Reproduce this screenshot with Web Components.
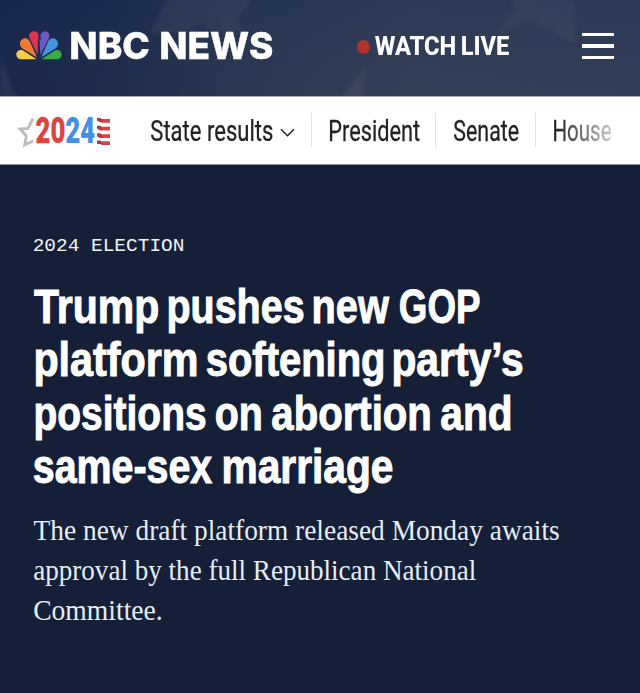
<!DOCTYPE html>
<html lang="en">
<head>
<meta charset="utf-8">
<title>NBC News</title>
<style>html,body{margin:0;background:#151f38}</style>
</head>
<body>
<news-page></news-page>
<script>
const define = (name, html, ready) => customElements.define(name, class extends HTMLElement {
  connectedCallback() {
    if (this.shadowRoot) return;
    this.attachShadow({mode: 'open'}).innerHTML = html;
    if (ready) ready(this, this.shadowRoot);
  }
});

/* One line of type whose inked width equals the w attribute; h is the box height, b the baseline. */
define('type-line', `<style>
  :host{display:block;flex:none}
  svg{display:block;overflow:visible}
  text{fill:currentColor;white-space:pre;stroke:currentColor;stroke-width:var(--embolden,0)}
</style><svg><text></text></svg>`, (host, root) => {
  const svg = root.querySelector('svg'), text = root.querySelector('text');
  const w = +host.getAttribute('w'), h = +host.getAttribute('h'), b = +host.getAttribute('b');
  const str = host.textContent;
  svg.setAttribute('width', w);
  svg.setAttribute('height', h);
  text.textContent = str;
  const cs = getComputedStyle(host);
  const ctx = document.createElement('canvas').getContext('2d');
  /* Side bearings are read at ten times the size, as glyph bounds are rounded to whole pixels. */
  ctx.font = cs.fontWeight + ' ' + parseFloat(cs.fontSize) * 10 + 'px ' + cs.fontFamily;
  const first = ctx.measureText(str[0]), last = ctx.measureText(str[str.length - 1]);
  const left = -first.actualBoundingBoxLeft / 10, right = (last.width - last.actualBoundingBoxRight) / 10;
  const s = w / (text.getComputedTextLength() - left - right);
  text.setAttribute('transform', `translate(${-left * s} ${b}) scale(${s} 1)`);
});

define('peacock-logo', `<style>:host{display:block;flex:none}svg{display:block}</style>
<svg width="46" height="29" viewBox="0 0 46 29">
  <path fill="#f5cd45" d="M20.500 28.300H5.200A4.800 4.800 0 0 1 .3 23.600c0-3.400 3.400-5.600 6.900-4.200z"/>
  <path fill="#ee7b34" d="M21 26.500 6.300 17.200C3.400 15.100 3.300 11.300 5.300 9 8 6.200 12.200 7 13.700 10.300z"/>
  <path fill="#dc3550" d="M21.700 24 13.600 7.300C12.300 3.700 14.200.500 17.800.300c3.400 0 5.600 2.700 4.800 6.100L21.900 10z"/>
  <path fill="#6d59c5" d="M24.300 24 23.500 8.500l1.600-.2c.4-1-.2-2-1-2.300.6-3.500 2.200-5.600 4.900-5.700 3.700.1 5.400 3.400 3.900 6.900z"/>
  <path fill="#4296dc" d="m25 26.500 7.300-16.200C33.800 7 38 6.200 40.600 9c2.100 2.400 1.900 6.100-.9 8.200z"/>
  <path fill="#3dab48" d="m25.500 28.300 13.300-8.900c3.500-1.400 6.900.8 6.900 4.200a4.800 4.800 0 0 1-4.900 4.700z"/>
</svg>`);

define('menu-icon', `<style>:host{display:flex;flex-direction:column;gap:8px;width:32px;flex:none}
i{height:3.600px;background:#fff}</style><i></i><i></i><i></i>`);

define('site-header', `<style>
  :host{display:grid;height:96px;overflow:hidden;border-bottom:1px solid #a9adbb;color:#fff}
  .bg,.row{grid-area:1/1}
  .row{display:flex;align-items:flex-start;padding:0 26px 0 16px;box-sizing:border-box}
  peacock-logo{margin:31px 9px 0 0}
  .brand{font:800 37px Inter,sans-serif;display:flex;gap:12px;margin-top:32px;--embolden:.4px}
  .dot{width:13.500px;height:13.500px;border-radius:50%;background:#b2312d;margin:40px 5px 0 84.500px;flex:none}
  .live{font:800 25px Roboto,sans-serif;margin-top:37px;display:flex;gap:7px}
  menu-icon{margin:32.500px 0 0 auto}
</style>
<svg class="bg" width="640" height="96" viewBox="0 0 640 96">
  <defs><linearGradient id="sky"><stop offset="0" stop-color="#15224a"/><stop offset=".18" stop-color="#1a284b"/><stop offset=".36" stop-color="#273552"/><stop offset=".65" stop-color="#323e56"/><stop offset="1" stop-color="#303c58"/></linearGradient>
  <linearGradient id="fall" x2="0" y2="1"><stop offset="0" stop-color="#1f2f58" stop-opacity=".3"/><stop offset="1" stop-color="#3d4650" stop-opacity=".15"/></linearGradient>
  <filter id="soft"><feGaussianBlur stdDeviation="2"/></filter></defs>
  <path fill="url(#sky)" d="M0 0h640v96H0z"/><path fill="url(#fall)" d="M0 0h640v96H0z"/>
  <g filter="url(#soft)" fill="#6c7275">
    <path opacity=".15" d="m166-2-16 36 35-1 17-9 12 8 28 2-3-19 15-17z"/>
    <path opacity=".18" d="M0 54 16 98H0z"/>
    <path opacity=".12" d="m510-2 4 12-19 26 33-16 48 24-2-46z"/>
    <path opacity=".2" d="m367 66-26 32h21z"/>
  </g>
</svg>
<div class="row">
  <peacock-logo></peacock-logo>
  <div class="brand"><type-line w="78" h="30" b="27">NBC</type-line><type-line w="111" h="30" b="27">NEWS</type-line></div>
  <span class="dot"></span>
  <div class="live"><type-line w="80" h="20" b="18">WATCH</type-line><type-line w="47" h="20" b="18">LIVE</type-line></div>
  <menu-icon></menu-icon>
</div>`);

define('election-logo', `<style>:host{display:flex;flex:none;align-items:flex-start;margin-top:2px;width:93.500px;font:900 36.500px Roboto,sans-serif}
svg{flex:none;display:block}type-line{margin:1.500px 1.500px 0 0}.s{margin-top:2px}.r{color:#dc4441}.b{color:#438fe4}</style>
<svg width="19" height="34" viewBox="0 0 19 34"><path d="M16 3.500 11 13.500 3 14 9.300 21 7.600 30 16 26" fill="none" stroke="#b8bfc1" stroke-width="2.800"/></svg>
<type-line class="r" w="28.500" h="30" b="26">20</type-line><type-line class="b" w="28.500" h="30" b="26">24</type-line>
<svg class="s" width="15" height="30" viewBox="0 0 15 30"><g fill="#cf4646"><path d="M5 2h9v3.800H5zM5 9.800h9v3.800H5zM5 17.300h9v3.800H5zM5 24.300h9v3.700H5z"/></g><g fill="#b7383e"><path d="M1 1h3.500l1.500 2v2H3.500L1 3.500zM1 8.800h3.500l1.500 2v2.500H3.500L1 11.500zM1 16.300h3.500l1.500 2V21H3.500L1 19.300zM1 23.500h3.500l1.500 2V27H1z"/></g></svg>`);

define('election-nav', `<style>
  :host{display:flex;align-items:flex-start;height:68px;box-sizing:border-box;background:#fff;color:#222;padding:16px 0 0 16.500px;font:400 28.800px Roboto,sans-serif;--embolden:.25px;border-bottom:1px solid #8b90a0}
  .items{display:flex;margin-left:41px;height:34px;-webkit-mask:linear-gradient(90deg,#000 405px,rgba(0,0,0,.22) 462px);mask:linear-gradient(90deg,#000 405px,rgba(0,0,0,.22) 462px)}
  svg{margin:15px 0 0 7px;display:block;flex:none}
  i{width:1px;background:#e2e3e5;flex:none;margin:0 18px 0 16px}
</style>
<election-logo></election-logo>
<div class="items"><type-line w="121.500" h="34" b="27.500">State results</type-line>
<svg width="15" height="10" viewBox="0 0 15 10"><path d="m1 1.200 6.500 6.600L14 1.200" fill="none" stroke="#222" stroke-width="1.500"/></svg>
<i></i><type-line w="89.500" h="34" b="27.500">President</type-line>
<i></i><type-line w="64.500" h="34" b="27.500">Senate</type-line>
<i></i><type-line w="57" h="34" b="27.500">House</type-line></div>`);

define('article-hero', `<style>
  :host{display:block;padding:73px 34px 0;color:#fff}
  h1{margin:32px 0 0;font:700 48.500px "Liberation Sans",sans-serif;--embolden:1px}
  h1 div{display:flex;gap:11px}
  .in{padding-left:1.500px}
  .eye{font:400 19px "Liberation Mono",monospace;color:#f1f5fa}
  p{margin:19.500px 0 0;font:400 28.800px "Liberation Serif",serif;color:#e6eef7}
</style>
<type-line class="eye" w="149" h="18" b="13">2024 ELECTION</type-line>
<h1>
<div><type-line w="124" h="53.400" b="34.500">Trump</type-line> <type-line w="134" h="53.400" b="34.500">pushes</type-line> <type-line w="75" h="53.400" b="34.500">new</type-line> <type-line w="79.500" h="53.400" b="34.500">GOP</type-line></div>
<div class="in"><type-line w="160" h="53.400" b="34.500">platform</type-line> <type-line w="176" h="53.400" b="34.500">softening</type-line> <type-line w="128" h="53.400" b="34.500">party’s</type-line></div>
<div class="in"><type-line w="169" h="53.400" b="34.500">positions</type-line> <type-line w="45" h="53.400" b="34.500">on</type-line> <type-line w="158" h="53.400" b="34.500">abortion</type-line> <type-line w="69" h="53.400" b="34.500">and</type-line></div>
<div><type-line w="178.500" h="53.400" b="34.500">same-sex</type-line> <type-line w="168.500" h="53.400" b="34.500">marriage</type-line></div>
</h1>
<p><type-line w="525" h="40" b="18.500">The new draft platform released Monday awaits</type-line>
<type-line w="442" h="40" b="18.500">approval by the full Republican National</type-line>
<type-line w="127" h="40" b="18.500">Committee.</type-line></p>`);

define('news-page', `<style>:host{display:block;height:693px;overflow:hidden;background:#151f38}</style>
<site-header></site-header><election-nav></election-nav><article-hero></article-hero>`);
</script>
</body>
</html>
